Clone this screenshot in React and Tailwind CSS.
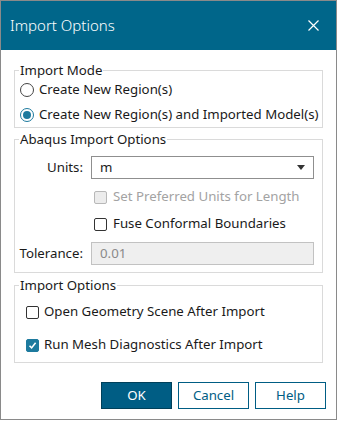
import React, { useState } from 'react';

const font = { fontFamily: '"Noto Sans", "Open Sans", sans-serif' };

// small checkbox matching the native Windows look
const Check = ({ checked, disabled }) => (
  <span
    className={
      'flex h-[13px] w-[13px] shrink-0 items-center justify-center rounded-[2px] border ' +
      (disabled
        ? 'border-[#b8b8b8] bg-[#ececec]'
        : checked
        ? 'border-[#1d7a9e] bg-[#1d7a9e]'
        : 'border-[#333] bg-white')
    }
  >
    {checked && (
      <svg width="9" height="9" viewBox="0 0 9 9">
        <path d="M1.5 4.8 L3.6 6.9 L7.6 1.8" fill="none" stroke="white" strokeWidth="1.6" />
      </svg>
    )}
  </span>
);

const Radio = ({ checked }) => (
  <span
    className={
      'flex h-[14px] w-[14px] shrink-0 items-center justify-center rounded-full border ' +
      (checked ? 'border-[#1d7a9e] border-[1.5px]' : 'border-[#444]')
    }
  >
    {checked && <span className="h-[8px] w-[8px] rounded-full bg-[#1d7a9e]" />}
  </span>
);

const Group = ({ title, className = '', children }) => (
  <fieldset className={'border border-[#dadada] ' + className}>
    <legend className="ml-[4px] px-[1px] leading-[18px] text-[#1a1a1a]">{title}</legend>
    {children}
  </fieldset>
);

export default function App() {
  const [mode, setMode] = useState(1);

  return (
    <div className="bg-white" style={font}>
      <div className="flex h-[420px] w-[337px] flex-col border border-[#8a8a8a] bg-white text-[13.25px] text-[#1a1a1a]">
        {/* Title bar */}
        <div className="flex h-[49px] shrink-0 items-center justify-between bg-[#00668a] pl-[9px] pr-[17px] text-white">
          <span className="text-[15px] font-light">Import Options</span>
          <svg width="11" height="11" viewBox="0 0 11 11">
            <path d="M0.5 0.5 L10.5 10.5 M10.5 0.5 L0.5 10.5" stroke="white" strokeWidth="1.2" />
          </svg>
        </div>

        <div className="flex flex-col px-[13px] pt-[11px]">
          {/* Import Mode */}
          <Group title="Import Mode">
            <div className="flex flex-col gap-[3px] pb-[1px] pl-[5px]">
              <div className="flex h-[22px] items-center gap-[5px]" onClick={() => setMode(0)}>
                <Radio checked={mode === 0} />
                <span>Create New Region(s)</span>
              </div>
              <div className="flex h-[22px] items-center gap-[5px]" onClick={() => setMode(1)}>
                <Radio checked={mode === 1} />
                <span>Create New Region(s) and Imported Model(s)</span>
              </div>
            </div>
          </Group>

          {/* Abaqus Import Options */}
          <Group title="Abaqus Import Options" className="mt-[2px]">
            <div className="grid grid-cols-[68px_1fr] items-center gap-x-[8px] pr-[8px] pb-[7px] pt-[8px]">
              <span className="text-right">Units:</span>
              <div className="flex h-[23px] items-center justify-between border border-[#8f8f8f] pl-[8px] pr-[8px]">
                <span>m</span>
                <svg width="8" height="5" viewBox="0 0 8 5">
                  <path d="M0 0 L8 0 L4 5 Z" fill="#333" />
                </svg>
              </div>

              <div />
              <div className="mt-[7px] flex h-[22px] items-center gap-[6px] pl-[3px] text-[#a3a3a3]">
                <Check disabled />
                <span>Set Preferred Units for Length</span>
              </div>

              <div />
              <div className="mt-[5px] flex h-[22px] items-center gap-[6px] pl-[3px]">
                <Check />
                <span>Fuse Conformal Boundaries</span>
              </div>

              <span className="mt-[7px] text-right">Tolerance:</span>
              <div className="mt-[7px] flex h-[23px] items-center border border-[#c2c2c2] bg-[#efefef] pl-[8px] text-[#8a8a8a]">
                0.01
              </div>
            </div>
          </Group>

          {/* Import Options */}
          <Group title="Import Options" className="mt-[3px]">
            <div className="flex flex-col gap-[11px] pb-[6px] pl-[11px] pt-[7px]">
              <div className="flex h-[22px] items-center gap-[5px]">
                <Check />
                <span>Open Geometry Scene After Import</span>
              </div>
              <div className="flex h-[22px] items-center gap-[5px]">
                <Check checked />
                <span>Run Mesh Diagnostics After Import</span>
              </div>
            </div>
          </Group>
        </div>

        {/* Buttons */}
        <div className="mt-[19px] flex justify-end gap-[6px] pr-[10px]">
          <button className="h-[27px] w-[71px] border border-[#00405a] bg-[#005d84] text-white">OK</button>
          <button className="h-[27px] w-[71px] border border-[#005d84] bg-white text-[#005d84]">Cancel</button>
          <button className="h-[27px] w-[71px] border border-[#005d84] bg-white text-[#005d84]">Help</button>
        </div>
      </div>
    </div>
  );
}
